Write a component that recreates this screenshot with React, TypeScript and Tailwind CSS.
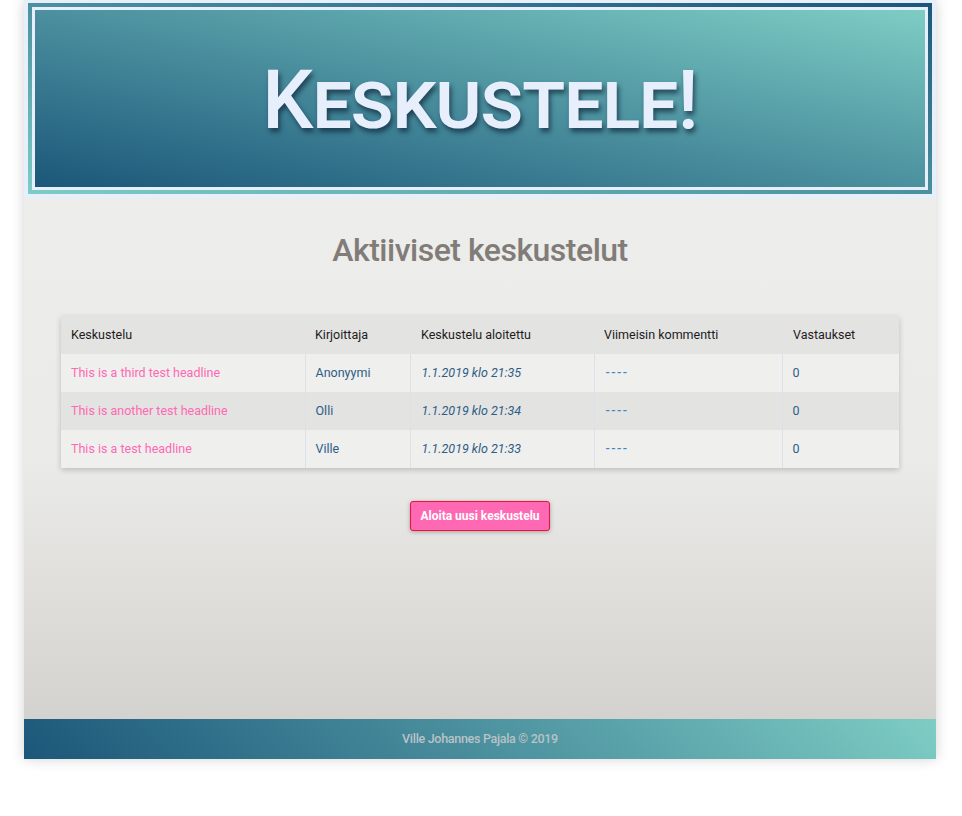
const threads = [
  { title: "This is a third test headline", author: "Anonyymi", started: "1.1.2019 klo 21:35", last: "----", replies: 0 },
  { title: "This is another test headline", author: "Olli", started: "1.1.2019 klo 21:34", last: "----", replies: 0 },
  { title: "This is a test headline", author: "Ville", started: "1.1.2019 klo 21:33", last: "----", replies: 0 },
];

export default function App() {
  return (
    <div className="min-h-[816px] bg-white font-['Roboto',sans-serif]">
      <div className="w-[912px] ml-[24px] shadow-[0_0_12px_rgba(0,0,0,0.18)]">

        {/* Header */}
        <header className="bg-[#e6effb] px-1 pt-[3px] pb-[4px]">
          <div className="bg-linear-to-bl from-[#1b5779] to-[#7ecdc4] p-1">
            <div className="border-[3px] border-[#e6effb]">
              <div className="h-[177px] bg-linear-to-tr from-[#1b5779] to-[#7ecdc4] flex items-center justify-center">
                <h1 className="text-[81px] leading-none font-medium text-[#e6effb] [font-variant:small-caps] tracking-[-1px] [text-shadow:2px_4px_5px_rgba(10,30,50,0.65)] mt-[4px]">
                  Keskustele!
                </h1>
              </div>
            </div>
          </div>
        </header>

        {/* Content */}
        <main className="bg-linear-to-b from-[#ededeb] via-[#ebebe9] to-[#d4d2ce] pt-[32px] pb-[188px]">
          <h2 className="text-center text-[32px] leading-[40px] font-medium text-[#817c77] tracking-[-0.5px]">
            Aktiiviset keskustelut
          </h2>

          <div className="mx-[37px] mt-[46px] shadow-[0_2px_6px_rgba(0,0,0,0.2)]">
            <table className="w-full table-fixed border-collapse text-[12.5px]">
              <thead>
                <tr className="bg-[#e3e3e2] text-[#1c1c1c] text-left h-[38px]">
                  <th className="w-[244px] pl-[10px] font-normal">Keskustelu</th>
                  <th className="w-[105px] pl-[10px] font-normal">Kirjoittaja</th>
                  <th className="w-[184px] pl-[11px] font-normal">Keskustelu aloitettu</th>
                  <th className="w-[188px] pl-[10px] font-normal">Viimeisin kommentti</th>
                  <th className="pl-[11px] font-normal">Vastaukset</th>
                </tr>
              </thead>
              <tbody>
                {threads.map((t, i) => (
                  <tr key={t.title} className={i % 2 === 1 ? "bg-[#e3e3e2] h-[38px]" : "bg-[#efefee] h-[38px]"}>
                    <td className="pl-[10px] text-[#ff69b4]">{t.title}</td>
                    <td className="pl-[10px] border-l border-[#dde0e7] text-[#2e5d85]">{t.author}</td>
                    <td className="pl-[11px] border-l border-[#dde0e7] text-[#2e5d85] italic">{t.started}</td>
                    <td className="pl-[11px] border-l border-[#dde0e7] text-[#3d87c4] font-medium tracking-[1.5px]">{t.last}</td>
                    <td className="pl-[10px] border-l border-[#dde0e7] text-[#2e5d85]">{t.replies}</td>
                  </tr>
                ))}
              </tbody>
            </table>
          </div>

          <div className="flex justify-center mt-[33px]">
            <button className="h-[30px] px-[9px] rounded-[3px] bg-[#ff69b4] border border-[#f0103c] text-white text-[12px] font-bold shadow-[0_1px_4px_rgba(0,0,0,0.3)]">
              Aloita uusi keskustelu
            </button>
          </div>
        </main>

        {/* Footer */}
        <footer className="h-[40px] bg-linear-45 from-[#1b5779] to-[#7ecdc4] flex items-center justify-center">
          <p className="text-[12.5px] font-medium text-[#b9c3c6] tracking-[-0.3px]">Ville Johannes Pajala © 2019</p>
        </footer>
      </div>
    </div>
  );
}
